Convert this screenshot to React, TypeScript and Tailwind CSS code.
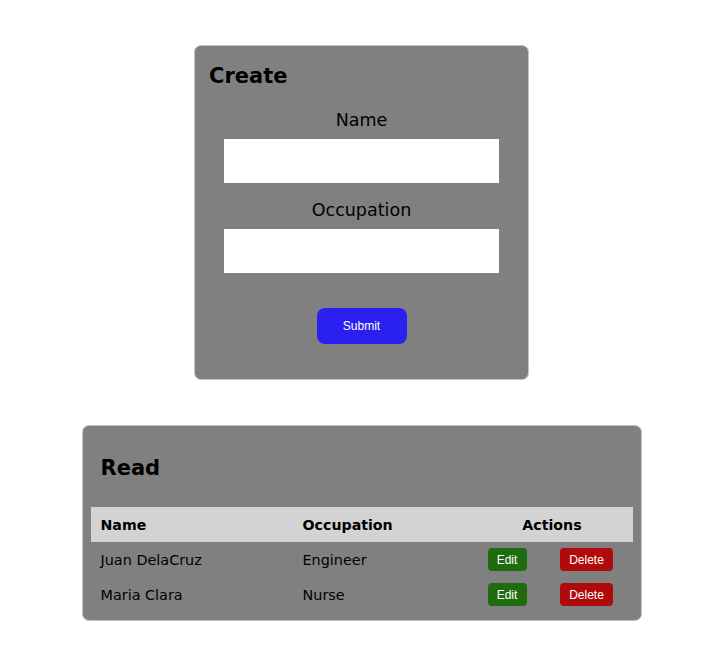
import React from "react";

const rows = [
  { name: "Juan DelaCruz", occupation: "Engineer" },
  { name: "Maria Clara", occupation: "Nurse" },
];

export default function App() {
  return (
    <div className="min-h-[647px] w-full bg-white flex flex-col items-center pt-[45px] pl-[2px] text-black font-['DejaVu_Sans',sans-serif]">
      <div className="w-[335px] h-[335px] bg-[#808080] border border-[#c4c4c4] rounded-[7px] flex flex-col pt-[18px]">
        <h2 className="pl-[14px] text-[21px] leading-[24px] font-bold">Create</h2>
        <label className="mt-[22px] text-center text-[17.5px] leading-[21px]">Name</label>
        <input className="mt-[8px] mx-auto w-[275px] h-[44px] bg-white outline-none" />
        <label className="mt-[17px] text-center text-[17.5px] leading-[21px]">Occupation</label>
        <input className="mt-[8px] mx-auto w-[275px] h-[44px] bg-white outline-none" />
        <button className="mt-[35px] mx-auto w-[90px] h-[36px] rounded-[8px] bg-[#2a20f0] text-white text-[12px] font-['Liberation_Sans',Arial,sans-serif]">
          Submit
        </button>
      </div>

      <div className="mt-[45px] w-[560px] bg-[#808080] border border-[#c4c4c4] rounded-[7px] px-[8px] pt-[30px] pb-[8px]">
        <h2 className="pl-[10px] text-[21px] leading-[24px] font-bold">Read</h2>
        <div className="mt-[27px] w-[542px]">
          <div className="grid grid-cols-[202px_177px_163px] h-[35px] items-center bg-[#d3d3d3] text-[14.2px] font-bold pt-[2px]">
            <div className="pl-[10px]">Name</div>
            <div className="pl-[10px]">Occupation</div>
            <div className="text-center pl-[2px]">Actions</div>
          </div>
          {rows.map((r) => (
            <div key={r.name} className="grid grid-cols-[202px_177px_75px_88px] h-[35px] items-center text-[14.4px]">
              <div className="pl-[10px] pt-[2px]">{r.name}</div>
              <div className="pl-[10px] pt-[2px]">{r.occupation}</div>
              <div className="flex justify-center">
                <button className="w-[39px] h-[23px] rounded-[4px] bg-[#1f6b10] text-white text-[12px] font-['Liberation_Sans',Arial,sans-serif]">
                  Edit
                </button>
              </div>
              <div className="flex justify-center pr-[4px]">
                <button className="w-[53px] h-[23px] rounded-[4px] bg-[#b00a0a] text-white text-[12px] font-['Liberation_Sans',Arial,sans-serif]">
                  Delete
                </button>
              </div>
            </div>
          ))}
        </div>
      </div>
    </div>
  );
}
